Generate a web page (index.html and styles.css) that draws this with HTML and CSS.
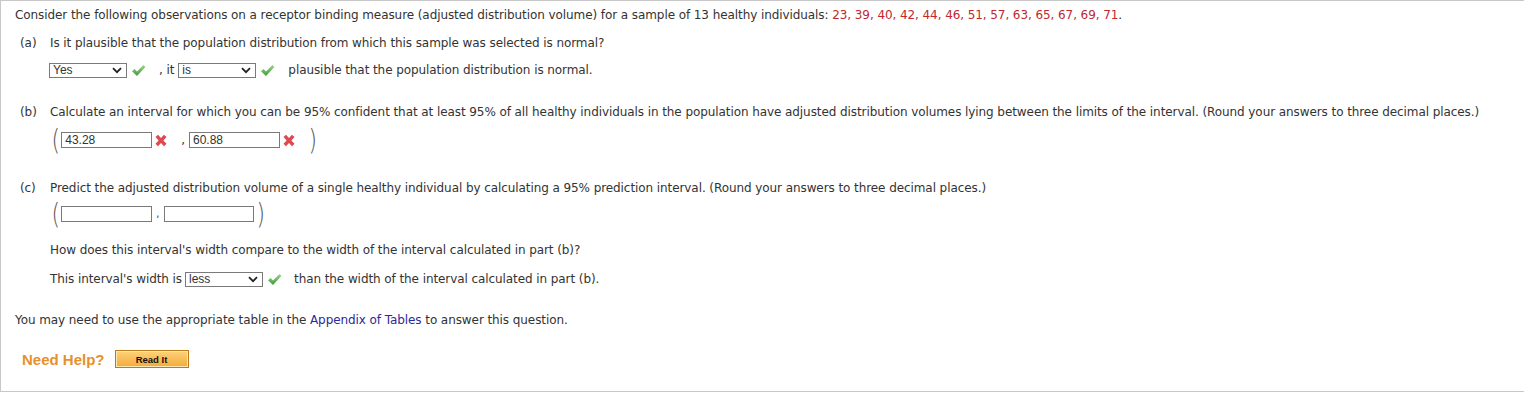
FILE: index.html
```html
<!DOCTYPE html>
<html>
<head>
<meta charset="utf-8">
<link rel="stylesheet" href="styles.css">
</head>
<body>
<div class="frame">
  <p class="intro">Consider the following observations on a receptor binding measure (adjusted distribution volume) for a sample of 13 healthy individuals: <span class="nums">23, 39, 40, 42, 44, 46, 51, 57, 63, 65, 67, 69, 71</span>.</p>

  <div class="part part-a">
    <span class="lbl">(a)</span>
    <div class="body">
      <p class="q">Is it plausible that the population distribution from which this sample was selected is normal?</p>
      <div class="row row-a">
        <span class="sel"><span class="sel-text">Yes</span><svg class="chev" width="10" height="7" viewBox="0 0 10 7"><path d="M1 1.2 L5 5.2 L9 1.2" fill="none" stroke="#222" stroke-width="1.8"/></svg></span>
        <svg class="ok" width="15" height="13" viewBox="0 0 15 13"><defs><linearGradient id="g1" x1="0" y1="0" x2="0" y2="1"><stop offset="0" stop-color="#9fd68c"/><stop offset="1" stop-color="#3f9a3b"/></linearGradient></defs><path d="M1 7.2 L3.6 5 L6 7.6 L12.4 1 L14.4 3 L6 12 Z" fill="url(#g1)"/></svg>
        <span class="txt comma-it">, it</span>
        <span class="sel"><span class="sel-text">is</span><svg class="chev" width="10" height="7" viewBox="0 0 10 7"><path d="M1 1.2 L5 5.2 L9 1.2" fill="none" stroke="#222" stroke-width="1.8"/></svg></span>
        <svg class="ok" width="15" height="13" viewBox="0 0 15 13"><path d="M1 7.2 L3.6 5 L6 7.6 L12.4 1 L14.4 3 L6 12 Z" fill="url(#g1)"/></svg>
        <span class="txt after">plausible that the population distribution is normal.</span>
      </div>
    </div>
  </div>

  <div class="part part-b">
    <span class="lbl">(b)</span>
    <div class="body">
      <p class="q">Calculate an interval for which you can be 95% confident that at least 95% of all healthy individuals in the population have adjusted distribution volumes lying between the limits of the interval. (Round your answers to three decimal places.)</p>
      <div class="row row-b">
        <span class="paren">(</span>
        <input class="box" type="text" value="43.28">
        <svg class="bad" width="14" height="13" viewBox="0 0 14 13"><path d="M1.5 3 L4 0.8 L7 4 L10 0.8 L12.5 3 L9.4 6.4 L12.5 9.8 L10 12.2 L7 8.9 L4 12.2 L1.5 9.8 L4.6 6.4 Z" fill="#e0494f"/></svg>
        <span class="txt sep">,</span>
        <input class="box" type="text" value="60.88">
        <svg class="bad" width="14" height="13" viewBox="0 0 14 13"><path d="M1.5 3 L4 0.8 L7 4 L10 0.8 L12.5 3 L9.4 6.4 L12.5 9.8 L10 12.2 L7 8.9 L4 12.2 L1.5 9.8 L4.6 6.4 Z" fill="#e0494f"/></svg>
        <span class="paren close-b">)</span>
      </div>
    </div>
  </div>

  <div class="part part-c">
    <span class="lbl">(c)</span>
    <div class="body">
      <p class="q">Predict the adjusted distribution volume of a single healthy individual by calculating a 95% prediction interval. (Round your answers to three decimal places.)</p>
      <div class="row row-c">
        <span class="paren">(</span>
        <input class="box" type="text" value="">
        <span class="txt sep-c">,</span>
        <input class="box box2" type="text" value="">
        <span class="paren close-c">)</span>
      </div>
      <p class="q q2">How does this interval's width compare to the width of the interval calculated in part (b)?</p>
      <div class="row row-d">
        <span class="txt">This interval's width is</span>
        <span class="sel"><span class="sel-text">less</span><svg class="chev" width="10" height="7" viewBox="0 0 10 7"><path d="M1 1.2 L5 5.2 L9 1.2" fill="none" stroke="#222" stroke-width="1.8"/></svg></span>
        <svg class="ok" width="15" height="13" viewBox="0 0 15 13"><path d="M1 7.2 L3.6 5 L6 7.6 L12.4 1 L14.4 3 L6 12 Z" fill="url(#g1)"/></svg>
        <span class="txt after">than the width of the interval calculated in part (b).</span>
      </div>
    </div>
  </div>

  <p class="note">You may need to use the appropriate table in the <a class="link" href="#">Appendix of Tables</a> to answer this question.</p>

  <div class="help">
    <span class="help-lbl">Need Help?</span>
    <span class="btn">Read It</span>
  </div>
</div>
</body>
</html>
```

FILE: styles.css
```css
html, body {
  margin: 0;
  padding: 0;
  background: #fff;
}
body {
  font-family: "DejaVu Sans", Verdana, sans-serif;
  font-size: 12px;
  letter-spacing: -0.08px;
  color: #333;
}
.frame {
  border: 1px solid #c8c8c8;
  border-right: none;
  padding: 0 0 0 14px;
  box-sizing: border-box;
  height: 392px;
}
p { margin: 0; }
.intro {
  line-height: 16px;
  padding-top: 6px;
}
.nums { color: #c0282d; }
.part {
  display: grid;
  grid-template-columns: 30px 1fr;
  margin-left: 5px;
}
.lbl { line-height: 16px; }
.q { line-height: 16px; }
.part-a { margin-top: 12px; }
.part-b { margin-top: 26px; }
.part-c { margin-top: 25px; }
.row {
  display: flex;
  align-items: center;
}
.row-a { margin-top: 11px; height: 16px; }
.row-b { margin-top: 5px; height: 30px; }
.row-c { margin-top: 3px; height: 30px; }
.q2 { margin-top: 13px; }
.row-d { margin-top: 13px; height: 16px; }
.txt { line-height: 16px; white-space: nowrap; }
.sel {
  display: inline-flex;
  align-items: center;
  justify-content: space-between;
  box-sizing: border-box;
  width: 78px;
  height: 15px;
  border: 1px solid #7a7a7a;
  background: #fff;
  font-family: "Liberation Sans", Arial, sans-serif;
  font-size: 12px;
  letter-spacing: 0;
  color: #333;
  padding: 0 4px 0 3px;
}
.row-a .sel:first-child { margin-left: -1px; }
.sel-text { line-height: 13px; }
.chev { display: block; }
.ok { margin-left: 4px; flex: none; }
.comma-it { margin-left: 13px; margin-right: 4px; }
.after { margin-left: 13px; }
.row-d .sel { margin-left: 3px; }
.row-d .after { margin-left: 12px; }
.paren {
  font-family: "DejaVu Sans", sans-serif;
  font-weight: 200;
  font-size: 29px;
  line-height: 30px;
  color: #555;
  transform: scaleX(0.75);
  margin-right: 0;
}
.box {
  box-sizing: border-box;
  width: 91px;
  height: 16px;
  border: 1px solid #7a7a7a;
  padding: 0 3px;
  margin: 0;
  font-family: "Liberation Sans", Arial, sans-serif;
  font-size: 12px;
  letter-spacing: 0;
  color: #333;
  outline: none;
  border-radius: 0;
}
.box2 { width: 90px; }
.bad { margin-left: 2px; flex: none; }
.sep { margin: 0 4px 0 13px; }
.close-b { margin-left: 11px; }
.sep-c { margin: 0 5px 0 4px; font-size: 10px; }
.close-c { margin-left: 1px; }
.note {
  margin-top: 25px;
  line-height: 16px;
}
.link { color: #2a2a9a; text-decoration: none; }
.help {
  display: flex;
  align-items: center;
  margin-top: 22px;
  margin-left: 7px;
}
.help-lbl {
  font-family: "Liberation Sans", Arial, sans-serif;
  font-weight: bold;
  font-size: 15px;
  letter-spacing: 0;
  color: #e8902a;
}
.btn {
  margin-left: 10px;
  box-sizing: border-box;
  width: 74px;
  height: 18px;
  border: 1px solid #c07a1a;
  background: linear-gradient(#fcd37a, #f6a93a);
  box-shadow: inset 0 0 0 1px #fde7b0;
  font-family: "Liberation Sans", Arial, sans-serif;
  font-weight: bold;
  font-size: 9.5px;
  letter-spacing: 0;
  color: #111;
  display: flex;
  align-items: center;
  justify-content: center;
}
```
